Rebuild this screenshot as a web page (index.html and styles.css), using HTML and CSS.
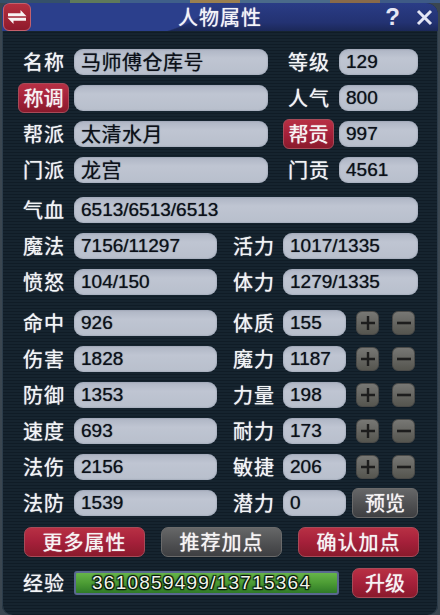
FILE: index.html
```html
<!DOCTYPE html>
<html lang="zh">
<head>
<meta charset="utf-8">
<title>人物属性</title>
<link rel="stylesheet" href="styles.css">
</head>
<body>
<div class="window">
  <header class="titlebar">
    <div class="title-left">
      <button class="swap" aria-label="切换">
        <svg width="20" height="16" viewBox="0 0 20 16"><path d="M1 4.2H13.5V1L19.5 7.2H1Z M19 11.8H6.5V15L.5 8.8H19Z" fill="#f8f4f4"/></svg>
      </button>
    </div>
    <div class="title-text">人物属性</div>
    <div class="title-right">
      <span class="help">?</span>
      <svg class="close" width="17" height="17" viewBox="0 0 17 17"><path d="M2 2L15 15M15 2L2 15" stroke="#e4e6f4" stroke-width="3" fill="none"/></svg>
    </div>
  </header>
  <main class="form">
    <section class="group top">
      <div class="row"><span class="label">名称</span><span class="field wide cjk">马师傅仓库号</span><span class="label right">等级</span><span class="field short">129</span></div>
      <div class="row"><span class="label"><button class="red tag">称调</button></span><span class="field wide cjk"></span><span class="label right">人气</span><span class="field short">800</span></div>
      <div class="row"><span class="label">帮派</span><span class="field wide cjk">太清水月</span><span class="label right"><button class="red tag">帮贡</button></span><span class="field short">997</span></div>
      <div class="row"><span class="label">门派</span><span class="field wide cjk">龙宫</span><span class="label right">门贡</span><span class="field short">4561</span></div>
    </section>
    <section class="group mid">
      <div class="row"><span class="label">气血</span><span class="field full">6513/6513/6513</span></div>
      <div class="row"><span class="label">魔法</span><span class="field half">7156/11297</span><span class="label mid-right">活力</span><span class="field half-r">1017/1335</span></div>
      <div class="row"><span class="label">愤怒</span><span class="field half">104/150</span><span class="label mid-right">体力</span><span class="field half-r">1279/1335</span></div>
    </section>
    <section class="group stats">
      <div class="row"><span class="label">命中</span><span class="field half">926</span><span class="label mid-right">体质</span><span class="field stat">155</span><button class="step plus"><svg width="16" height="16" viewBox="0 0 16 16"><path d="M8 1V15M1 8H15" stroke="#1d1d1d" stroke-width="2.4"/></svg></button><button class="step minus"><svg width="16" height="16" viewBox="0 0 16 16"><path d="M1 8H15" stroke="#1d1d1d" stroke-width="2.6"/></svg></button></div>
      <div class="row"><span class="label">伤害</span><span class="field half">1828</span><span class="label mid-right">魔力</span><span class="field stat">1187</span><button class="step plus"><svg width="16" height="16" viewBox="0 0 16 16"><path d="M8 1V15M1 8H15" stroke="#1d1d1d" stroke-width="2.4"/></svg></button><button class="step minus"><svg width="16" height="16" viewBox="0 0 16 16"><path d="M1 8H15" stroke="#1d1d1d" stroke-width="2.6"/></svg></button></div>
      <div class="row"><span class="label">防御</span><span class="field half">1353</span><span class="label mid-right">力量</span><span class="field stat">198</span><button class="step plus"><svg width="16" height="16" viewBox="0 0 16 16"><path d="M8 1V15M1 8H15" stroke="#1d1d1d" stroke-width="2.4"/></svg></button><button class="step minus"><svg width="16" height="16" viewBox="0 0 16 16"><path d="M1 8H15" stroke="#1d1d1d" stroke-width="2.6"/></svg></button></div>
      <div class="row"><span class="label">速度</span><span class="field half">693</span><span class="label mid-right">耐力</span><span class="field stat">173</span><button class="step plus"><svg width="16" height="16" viewBox="0 0 16 16"><path d="M8 1V15M1 8H15" stroke="#1d1d1d" stroke-width="2.4"/></svg></button><button class="step minus"><svg width="16" height="16" viewBox="0 0 16 16"><path d="M1 8H15" stroke="#1d1d1d" stroke-width="2.6"/></svg></button></div>
      <div class="row"><span class="label">法伤</span><span class="field half">2156</span><span class="label mid-right">敏捷</span><span class="field stat">206</span><button class="step plus"><svg width="16" height="16" viewBox="0 0 16 16"><path d="M8 1V15M1 8H15" stroke="#1d1d1d" stroke-width="2.4"/></svg></button><button class="step minus"><svg width="16" height="16" viewBox="0 0 16 16"><path d="M1 8H15" stroke="#1d1d1d" stroke-width="2.6"/></svg></button></div>
      <div class="row"><span class="label">法防</span><span class="field half">1539</span><span class="label mid-right">潜力</span><span class="field stat">0</span><button class="grey preview">预览</button></div>
    </section>
    <section class="actions">
      <button class="red action">更多属性</button>
      <button class="grey action">推荐加点</button>
      <button class="red action">确认加点</button>
    </section>
    <section class="exp-row">
      <span class="label">经验</span>
      <div class="exp-bar"><span class="exp-text">3610859499/13715364</span></div>
      <button class="red upgrade">升级</button>
    </section>
  </main>
</div>
</body>
</html>
```

FILE: styles.css
```css
* { box-sizing: border-box; }
html, body { margin: 0; height: 615px; overflow: hidden; }
body {
  width: 440px;
  background:
    linear-gradient(90deg, #35506a 0 70px, #5f7a5a 70px 120px, #3f5f8a 120px 190px, #9a8050 190px 240px, #4a6a8a 240px 330px, #8a6a4a 330px 380px, #3e5a86 380px 440px) top / 100% 3px no-repeat,
    #3a4650;
  font-family: "Noto Sans CJK SC", "Liberation Sans", sans-serif;
}
.window {
  width: 436px;
  height: 612px;
  margin: 3px 0 0 2px;
  border-radius: 8px 12px 10px 10px;
  overflow: hidden;
  background: repeating-linear-gradient(180deg, #16242f 0 2px, #101c26 2px 3px);
  box-shadow: inset 1px 0 0 #2c3c4a, inset -1px 0 0 #2c3c4a;
}
.titlebar {
  height: 28px;
  display: grid;
  grid-template-columns: 1fr auto 1fr;
  align-items: center;
  background:
    radial-gradient(150px 46px at 60px -4px, #2b3f8c 0 98%, transparent 100%),
    linear-gradient(180deg, #2a3c86 0, #233272 70%, #1b2858 100%);
}
.title-left { display: flex; padding-left: 1px; }
.swap {
  width: 28px;
  height: 28px;
  padding: 0;
  display: flex;
  align-items: center;
  justify-content: center;
  border: 1px solid #c4606c;
  border-radius: 6px;
  background: linear-gradient(180deg, #b5303f, #8f1a2c);
}
.title-text {
  color: #f4f4f8;
  font-size: 20px;
  letter-spacing: 1px;
  line-height: 28px;
  text-shadow: 0 0 1px #f4f4f8;
}
.title-right {
  display: flex;
  justify-content: flex-end;
  align-items: center;
  gap: 16px;
  padding-right: 5px;
}
.help {
  color: #e4e6f4;
  font: bold 24px/28px "Liberation Sans", sans-serif;
}
.form {
  padding: 18px 0 0 21px;
  display: flex;
  flex-direction: column;
}
.group { display: flex; flex-direction: column; gap: 10px; }
.mid { margin-top: 14px; }
.stats { margin-top: 15px; }
.row { display: flex; align-items: center; height: 26px; }
.label {
  flex: none;
  width: 51px;
  color: #f2f4f6;
  font-size: 20px;
  letter-spacing: 1px;
  line-height: 26px;
  white-space: nowrap;
  display: flex;
  align-items: center;
  text-shadow: 0 0 1px #f2f4f6;
}
.label.right { margin-left: 20px; }
.label.mid-right { margin-left: 16px; width: 50px; }
.field {
  flex: none;
  height: 26px;
  border-radius: 9px;
  padding-left: 7px;
  color: #0c1018;
  font: 19px/26px "Liberation Sans", sans-serif;
  background: linear-gradient(180deg, #aeb5c4 0, #bfc5d2 35%, #b8bfcc 100%);
  box-shadow: inset 0 0 2px #868fa0;
  white-space: nowrap;
  text-shadow: 0 0 1px #3a4250;
}
.cjk { font-family: "Noto Sans CJK SC", sans-serif; font-size: 20px; letter-spacing: 0.5px; }
.wide { width: 194px; }
.short { width: 79px; }
.full { width: 344px; }
.half { width: 143px; }
.half-r { width: 135px; }
.stat { width: 63px; }
button {
  font-family: "Noto Sans CJK SC", sans-serif;
  color: #f6f4f4;
  padding: 0;
  cursor: pointer;
  text-shadow: 0 0 1px #f6f4f4;
}
.red {
  border: 1px solid #a84a58;
  background: linear-gradient(180deg, #b83044 0, #a5203a 50%, #8a1a2c 100%);
}
.grey {
  border: 1px solid #6a6a6a;
  background: linear-gradient(180deg, #666768 0, #4d4e50 60%, #3e3f42 100%);
}
.tag {
  width: 51px;
  height: 30px;
  margin-left: -5px;
  border-radius: 6px;
  font-size: 20px;
  line-height: 26px;
  flex: none;
}
.step {
  flex: none;
  width: 23px;
  height: 24px;
  display: flex;
  align-items: center;
  justify-content: center;
  border: 1px solid #4a4a48;
  border-radius: 6px;
  background: linear-gradient(180deg, #777774, #55554f);
}
.plus { margin-left: 10px; }
.minus { margin-left: 13px; }
.preview {
  flex: none;
  width: 66px;
  height: 30px;
  margin-left: 6px;
  border-radius: 6px;
  font-size: 20px;
  line-height: 26px;
}
.actions {
  display: flex;
  gap: 16px;
  margin: 11px 0 0 1px;
}
.action {
  width: 121px;
  height: 30px;
  border-radius: 7px;
  font-size: 20px;
  letter-spacing: 1px;
  line-height: 26px;
}
.exp-row {
  display: flex;
  align-items: center;
  height: 30px;
  margin-top: 11px;
}
.exp-bar {
  flex: none;
  width: 265px;
  height: 24px;
  border: 2px solid #5a6890;
  border-radius: 3px;
  display: flex;
  align-items: center;
  padding-left: 16px;
  background: linear-gradient(180deg, #66b44a 0, #4c9c34 50%, #2f7a28 100%);
}
.exp-text {
  color: #f2f6ea;
  font: 19px/20px "Liberation Sans", sans-serif;
  letter-spacing: 1.25px;
  text-shadow: 0 0 2px #06120a, 1px 1px 1px #06120a, -1px -1px 1px #06120a, 1px -1px 1px #06120a, -1px 1px 1px #06120a;
}
.upgrade {
  flex: none;
  width: 66px;
  height: 30px;
  margin-left: 13px;
  border-radius: 7px;
  font-size: 20px;
  line-height: 26px;
}
```
